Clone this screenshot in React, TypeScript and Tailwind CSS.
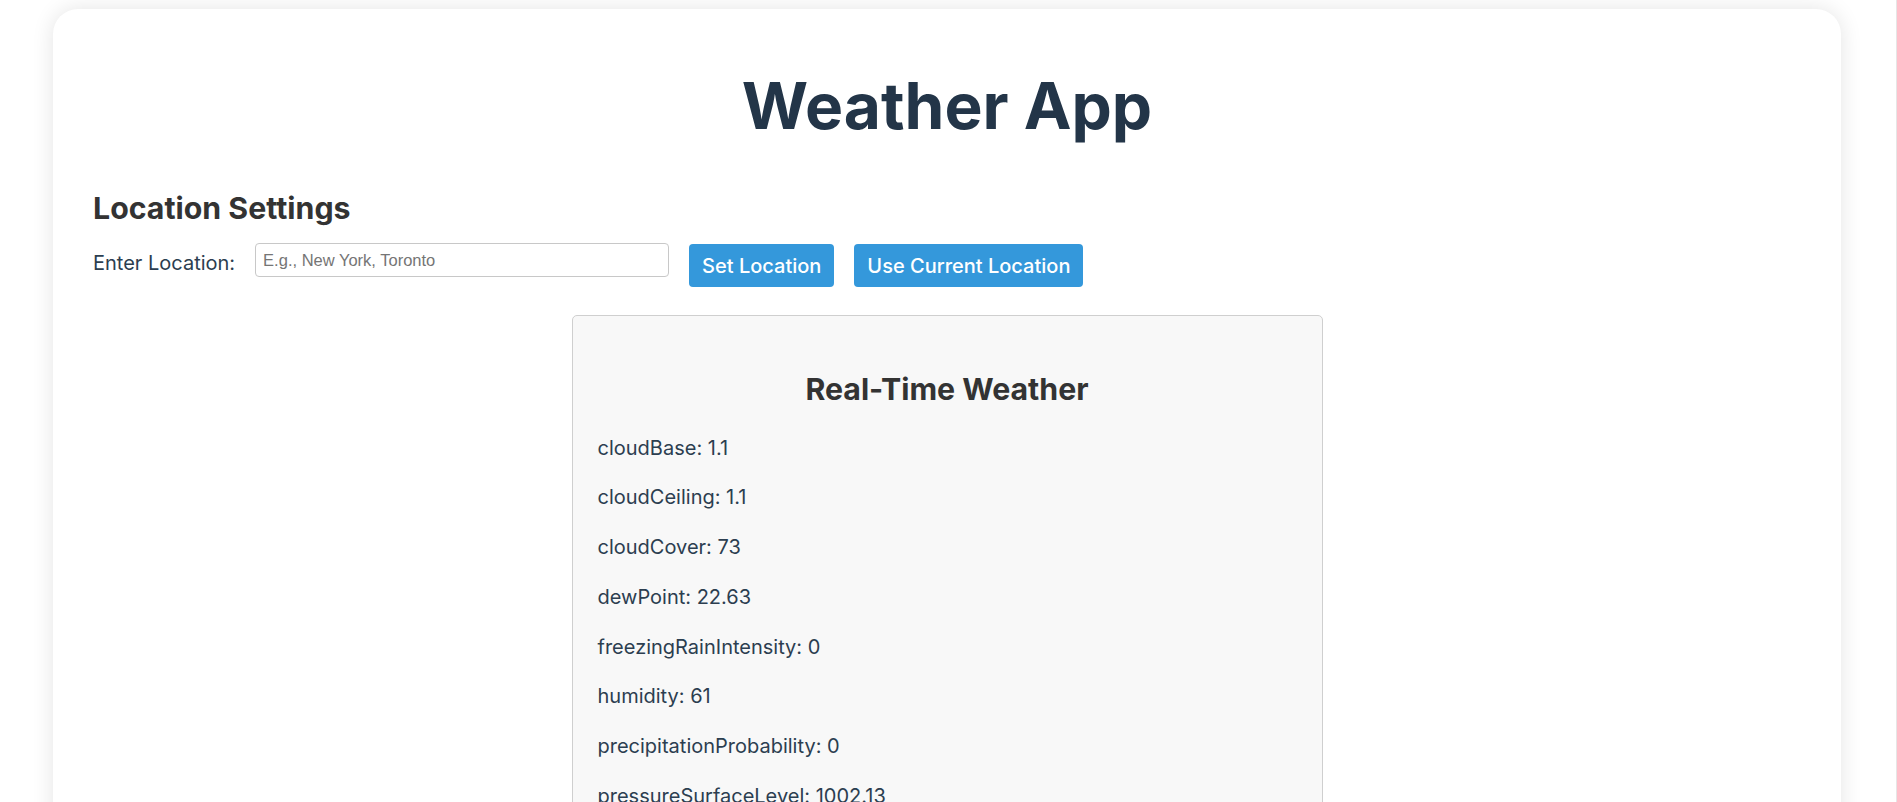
/**
 * App.tsx
 * Weather App: location settings row and a real-time weather card.
 */

const weather: { label: string; value: string }[] = [
  { label: 'cloudBase', value: '1.1' },
  { label: 'cloudCeiling', value: '1.1' },
  { label: 'cloudCover', value: '73' },
  { label: 'dewPoint', value: '22.63' },
  { label: 'freezingRainIntensity', value: '0' },
  { label: 'humidity', value: '61' },
  { label: 'precipitationProbability', value: '0' },
  { label: 'pressureSurfaceLevel', value: '1002.13' },
  { label: 'rainIntensity', value: '0' },
  { label: 'sleetIntensity', value: '0' },
  { label: 'snowIntensity', value: '0' },
  { label: 'temperature', value: '30.63' },
];

export default function App() {
  return (
    <div className="min-h-screen w-full overflow-hidden border-r border-[#e6e6e6] bg-white font-['Inter',sans-serif]">
      <div className="ml-[53px] mr-[55px] mt-[9px] rounded-[25px] bg-white px-10 pt-[58px] pb-10 shadow-[0_0_22px_rgba(0,0,0,0.11)]">
        {/* Title */}
        <h1 className="text-center text-[64px] font-bold leading-[77px] text-[#233548]">
          Weather App
        </h1>

        {/* Location Settings */}
        <h2 className="mt-[46px] text-[30.3px] font-bold leading-[36px] text-[#333333]">
          Location Settings
        </h2>
        <div className="mt-[17px] flex items-start gap-5">
          <label className="mt-[8px] text-[20px] leading-[24px] text-[#2c3e50]">
            Enter Location:
          </label>
          <input
            type="text"
            placeholder="E.g., New York, Toronto"
            className="h-[34px] w-[414px] rounded-[4px] border border-[#c8c8c8] bg-white px-[7px] font-['Liberation_Sans',Arial,sans-serif] text-[16.5px] text-[#333] placeholder:text-[#757575] focus:outline-none"
          />
          <button className="mt-px h-[43px] rounded-[4px] bg-[#3498db] px-[13px] text-[20px] font-medium text-white">
            Set Location
          </button>
          <button className="mt-px h-[43px] rounded-[4px] bg-[#3498db] px-[13px] text-[20px] font-medium text-white">
            Use Current Location
          </button>
        </div>

        {/* Real-Time Weather card */}
        <div className="mx-auto mt-[28px] w-[751px] rounded-[5px] border border-[#cfcfcf] bg-[#f8f8f8] px-[25px] pt-[55px] pb-6">
          <h2 className="mb-[26.5px] text-center text-[30.3px] font-bold leading-[36px] text-[#333333]">
            Real-Time Weather
          </h2>
          <div className="flex flex-col">
            {weather.map((item) => (
              <p key={item.label} className="mb-5 text-[20px] leading-[29.8px] text-[#2c3e50]">
                {item.label}: {item.value}
              </p>
            ))}
          </div>
        </div>
      </div>
    </div>
  );
}
